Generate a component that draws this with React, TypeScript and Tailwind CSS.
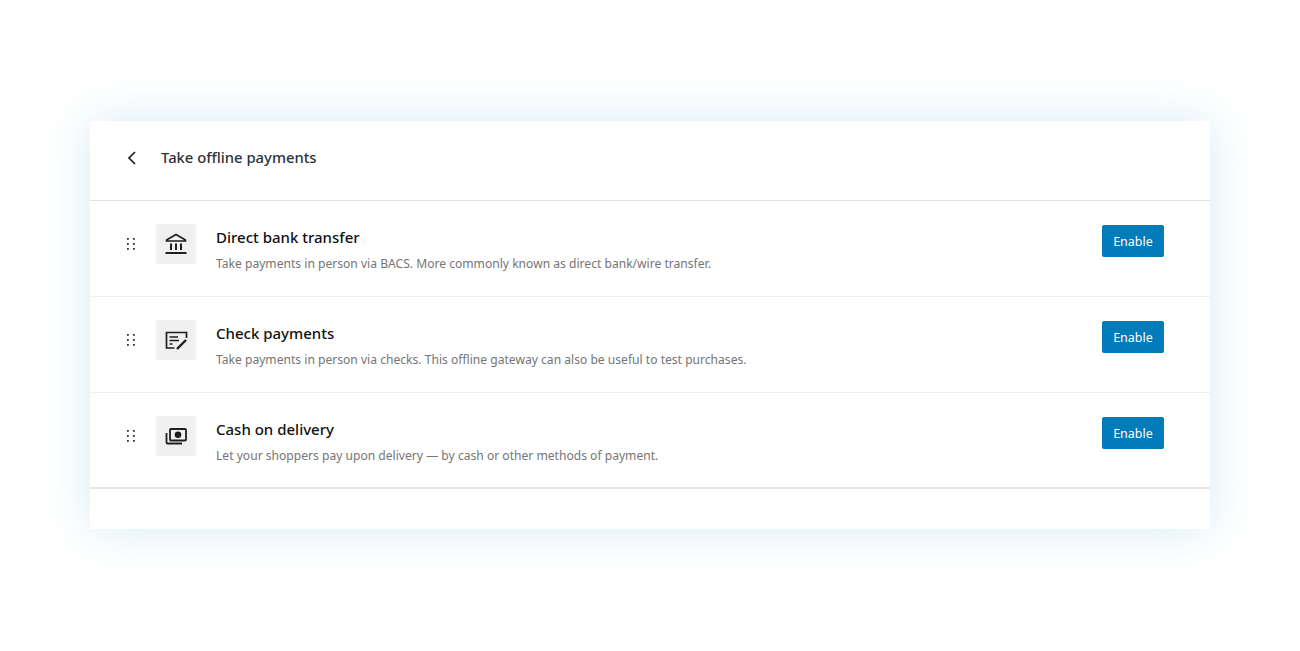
import React from "react";

const methods = [
  {
    title: "Direct bank transfer",
    desc: "Take payments in person via BACS. More commonly known as direct bank/wire transfer.",
    icon: (
      <svg width="24" height="24" viewBox="0 0 24 24" fill="none" stroke="#1e1e1e" strokeWidth="1.6">
        <path d="M2.500 8 12 2.500 21.500 8v1h-19z" />
        <path d="M7 11.500v6.500M12 11.500v6.500M17 11.500v6.500" strokeWidth="2" />
        <path d="M1.500 21h21" strokeWidth="2" />
      </svg>
    ),
  },
  {
    title: "Check payments",
    desc: "Take payments in person via checks. This offline gateway can also be useful to test purchases.",
    icon: (
      <svg width="24" height="24" viewBox="0 0 24 24" fill="none" stroke="#1e1e1e" strokeWidth="1.7">
        <path d="M22.500 10V4.500H2.500v15.500h8" />
        <path d="M5.500 9H14M5.500 12.500H15M5.500 16h3" />
        <path d="M13 21 22 12" strokeWidth="2.400" />
      </svg>
    ),
  },
  {
    title: "Cash on delivery",
    desc: "Let your shoppers pay upon delivery — by cash or other methods of payment.",
    icon: (
      <svg width="24" height="24" viewBox="0 0 24 24" fill="none" stroke="#1e1e1e" strokeWidth="1.8">
        <rect x="6" y="5" width="16" height="11.500" rx="1" />
        <circle cx="14" cy="10.700" r="2.400" fill="#1e1e1e" />
        <path d="M2.500 9v9.500a1 1 0 0 0 1 1H18" />
      </svg>
    ),
  },
];

function Grip() {
  return (
    <svg width="10" height="14" viewBox="0 0 10 14" fill="#333">
      <rect x="1" y="1" width="1.800" height="1.800" />
      <rect x="7" y="1" width="1.800" height="1.800" />
      <rect x="1" y="6" width="1.800" height="1.800" />
      <rect x="7" y="6" width="1.800" height="1.800" />
      <rect x="1" y="11" width="1.800" height="1.800" />
      <rect x="7" y="11" width="1.800" height="1.800" />
    </svg>
  );
}

export default function App() {
  return (
    <div className="h-[651px] bg-white px-[90px] pt-[121px] font-['Noto_Sans',sans-serif]">
      <div className="bg-white shadow-[0_0_45px_rgba(150,210,230,0.4)]">
        <div className="h-[80px] flex items-center pl-[36px] pb-[6px] border-b border-[#e0e0e0]">
          <svg width="12" height="16" viewBox="0 0 12 16" fill="none" stroke="#1e1e1e" strokeWidth="1.7">
            <path d="M9 2 3 8l6 6" />
          </svg>
          <div className="ml-[23px] text-[14.8px] font-medium text-[#2c3338] leading-none">
            Take offline payments
          </div>
        </div>
        <div className="border-b-2 border-[#e6e6e6]">
          {methods.map((m, i) => (
            <div
              key={m.title}
              className={`flex items-start pl-[36px] pr-[46px] pt-[23px] ${i < 2 ? "h-[96px] border-b border-[#f0f0f0]" : "h-[94px]"}`}
            >
              <div className="w-[10px] mt-[13px]">
                <Grip />
              </div>
              <div className="ml-[20px] w-[40px] h-[40px] rounded-[3px] bg-[#f0f0f0] flex items-center justify-center">
                {m.icon}
              </div>
              <div className="ml-[20px] flex-1">
                <div className="text-[15px] font-medium text-[#111111] leading-[26px]">{m.title}</div>
                <div className="text-[12.1px] text-[#757575] leading-[18px] mt-[5px]">{m.desc}</div>
              </div>
              <button className="w-[62px] h-[32px] mt-[1px] pt-[3px] rounded-[2px] bg-[#007cba] text-white text-[12.5px] leading-none">
                Enable
              </button>
            </div>
          ))}
        </div>
        <div className="h-[40px]" />
      </div>
    </div>
  );
}
